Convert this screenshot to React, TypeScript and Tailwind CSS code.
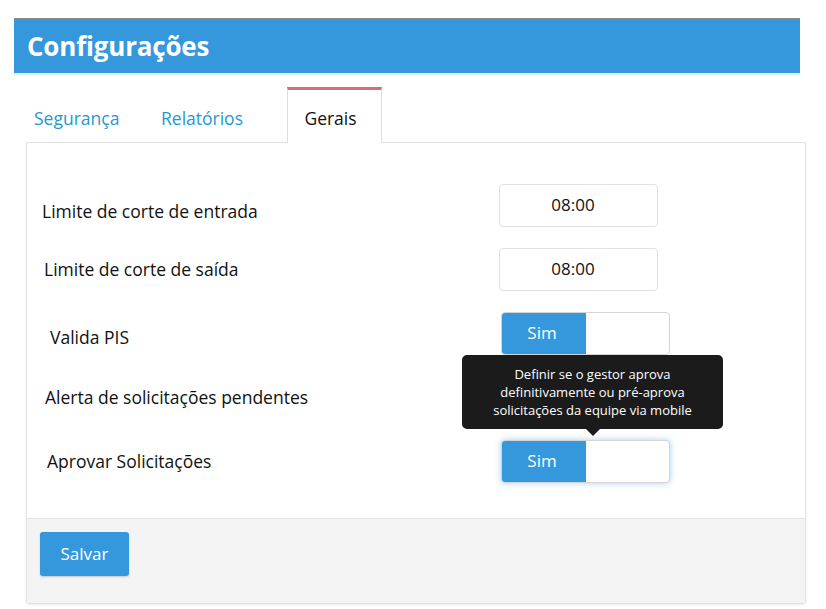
import React from "react";

const font = { fontFamily: '"Open Sans", "Noto Sans", sans-serif' };

function TimeInput({ value }: { value: string }) {
  return (
    <div className="w-[159px] h-[43px] border border-[#e2e2e2] rounded-[4px] flex items-center justify-center pr-[11px] text-[17px] text-[#111] bg-white">
      {value}
    </div>
  );
}

function Toggle({ glow }: { glow?: boolean }) {
  return (
    <div
      className={
        "ml-[2px] w-[169px] h-[43px] border border-[#d4d4d4] rounded-[4px] flex overflow-hidden bg-white " +
        (glow ? "shadow-[0_0_6px_rgba(52,152,219,0.45)]" : "")
      }
    >
      <div className="w-[84px] h-full bg-[#3598dc] flex items-center justify-center pr-[4px] text-white text-[17px]">
        Sim
      </div>
      <div className="flex-1" />
    </div>
  );
}

export default function App() {
  const rows: { label: string; pad: string; control: React.ReactNode }[] = [
    { label: "Limite de corte de entrada", pad: "pl-[15px] pt-[12px]", control: <TimeInput value="08:00" /> },
    { label: "Limite de corte de saída", pad: "pl-[17px]", control: <TimeInput value="08:00" /> },
    { label: "Valida PIS", pad: "pl-[23px] pt-[8px]", control: <Toggle /> },
    { label: "Alerta de solicitações pendentes", pad: "pl-[18px]", control: <Toggle /> },
    {
      label: "Aprovar Solicitações",
      pad: "pl-[20px]",
      control: (
        <div className="relative">
          <Toggle glow />
          <div className="absolute left-[-37px] top-[-85px] w-[261px] h-[74px] bg-[#1b1b1b] rounded-[5px] text-white text-[13px] leading-[18px] flex flex-col items-center justify-center text-center">
            <span>Definir se o gestor aprova</span>
            <span>definitivamente ou pré-aprova</span>
            <span>solicitações da equipe via mobile</span>
            <div className="absolute bottom-[-7px] left-[124px] w-0 h-0 border-l-[7px] border-r-[7px] border-t-[7px] border-l-transparent border-r-transparent border-t-[#1b1b1b]" />
          </div>
        </div>
      ),
    },
  ];

  return (
    <div className="w-[826px] h-[609px] bg-white overflow-hidden" style={font}>
      <div className="pt-[18px] pl-[14px]">
        <div className="w-[786px] h-[57px] bg-[#3598dc] border-t border-[#8c8c8c] border-b-2 border-b-[#d8f4fb] flex items-center pl-[13px]">
          <h1 className="text-[26px] font-bold text-white tracking-[-0.2px]">Configurações</h1>
        </div>
      </div>

      <div className="ml-[26px] mt-[12px] flex items-stretch h-[55px] relative z-10">
        <div className="w-[126px] pl-[8px] pt-[7px] flex items-center text-[17.5px] text-[#1f98d4]">Segurança</div>
        <div className="w-[135px] pl-[9px] pt-[7px] flex items-center text-[17.5px] text-[#1f98d4]">Relatórios</div>
        <div className="w-[95px] border-t-[3px] border-t-[#d86b73] border-x border-x-[#dedede] bg-white mb-[-1px] pt-[4px] pr-[8px] flex items-center justify-center text-[17.5px] text-[#111]">
          Gerais
        </div>
      </div>

      <div className="ml-[26px] w-[780px] border border-[#e2e2e2] rounded-b-[3px] shadow-[0_1px_2px_rgba(0,0,0,0.08)]">
        <div className="pt-[30px] pb-[25px]">
          {rows.map((r) => (
            <div key={r.label} className="h-[64px] flex items-center">
              <div className={"w-[472px] text-[17.5px] text-[#111] " + r.pad}>{r.label}</div>
              {r.control}
            </div>
          ))}
        </div>
        <div className="bg-[#f4f4f4] border-t border-[#e6e6e6] h-[85px] pl-[13px] pt-[13px]">
          <button className="w-[89px] h-[44px] bg-[#3598dc] rounded-[3px] text-white text-[17px] shadow-[0_1px_2px_rgba(0,0,0,0.2)]">
            Salvar
          </button>
        </div>
      </div>
    </div>
  );
}
